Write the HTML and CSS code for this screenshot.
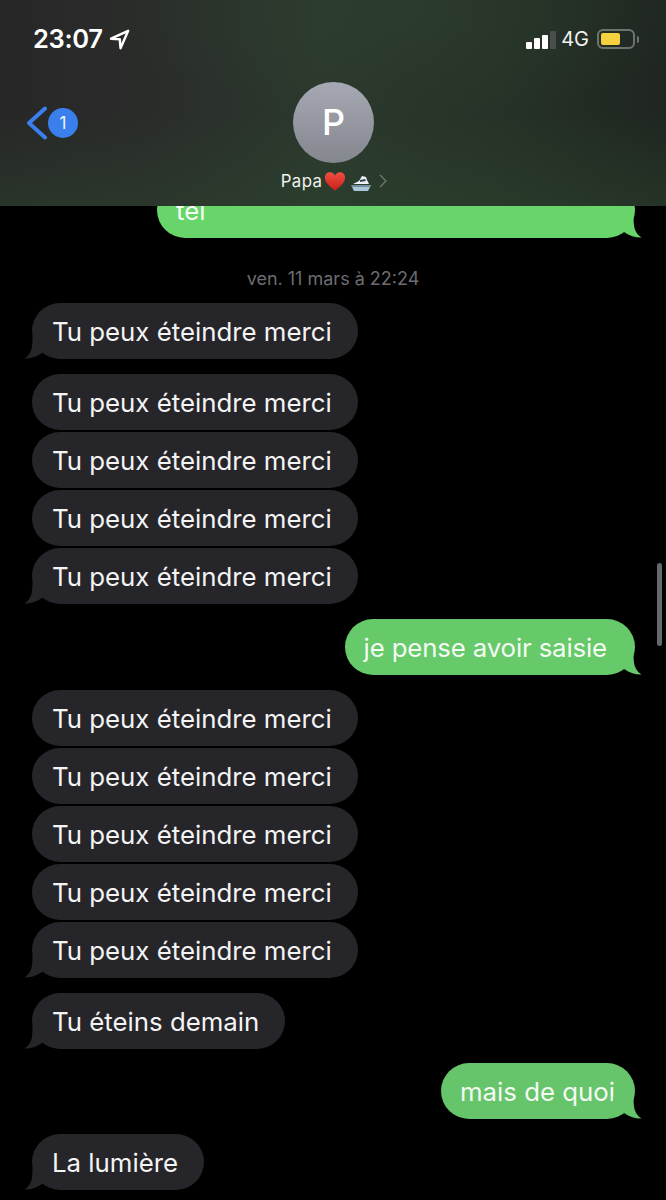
FILE: index.html
```html
<!DOCTYPE html>
<html lang="fr">
<head>
<meta charset="utf-8">
<title>Papa</title>
<link rel="stylesheet" href="styles.css">
</head>
<body>
<div class="phone">
  <header class="header">
    <div class="status">
      <div class="status-left">
        <span class="time">23:07</span>
        <svg class="loc" width="21" height="21" viewBox="0 0 21 21"><path d="M19.200 1.800 2 9.700l8.800.6.700 8.900z" fill="none" stroke="#fff" stroke-width="2.400" stroke-linejoin="round"/></svg>
      </div>
      <div class="status-right">
        <div class="signal"><i class="b1"></i><i class="b2"></i><i class="b3"></i><i class="b4"></i></div>
        <span class="net">4G</span>
        <div class="battery"><div class="level"></div></div>
        <div class="nub"></div>
      </div>
    </div>
    <div class="nav">
      <div class="back">
        <svg width="22" height="34" viewBox="0 0 22 34"><path d="M19 2.500 3 17l16 14.500" fill="none" stroke="#3a7fec" stroke-width="4" stroke-linecap="round" stroke-linejoin="round"/></svg>
        <span class="badge">1</span>
      </div>
      <div class="contact">
        <div class="avatar">P</div>
        <div class="name">
          <span>Papa</span>
          <svg class="heart" width="22" height="21" viewBox="0 0 24 22"><defs><linearGradient id="hg" x1="0" y1="0" x2="0" y2="1"><stop offset="0" stop-color="#f0503f"/><stop offset="1" stop-color="#c81e1a"/></linearGradient></defs><path d="M12 21C6 16 1 12 1 6.800 1 3 3.800 1 6.500 1 9 1 11 2.400 12 4.500 13 2.400 15 1 17.500 1 20.200 1 23 3 23 6.800 23 12 18 16 12 21z" fill="url(#hg)"/></svg>
          <svg class="boat" width="22" height="19" viewBox="0 0 22 19"><path d="M1 12h20l-3 6H4z" fill="#a9c6d6"/><path d="M3 11 9 8l3-5 4 1 1 3 2 4z" fill="#eef2f4"/><path d="M10 7l5-1 1 2-6 1z" fill="#33475a"/><path d="M1 13h19" stroke="#40566a" stroke-width="1"/></svg>
          <svg class="chev" width="8" height="14" viewBox="0 0 8 14"><path d="M1 1l6 6-6 6" fill="none" stroke="#6d7a6e" stroke-width="1.300"/></svg>
        </div>
      </div>
    </div>
  </header>

  <main class="thread">
    <div class="row out">
      <div class="bubble long bright">tel
        <svg class="tail-r" width="30" height="22" viewBox="0 0 30 22"><path d="M20.500 0C20.500 11 21.500 17 28.500 21.500 24 22 17 20 11 16L0 10V0z" fill="#67d56a"/></svg>
      </div>
    </div>

    <div class="stamp">ven. 11 mars à 22:24</div>

    <div class="row in"><div class="bubble">Tu peux éteindre merci
      <svg class="tail-l" width="30" height="22" viewBox="0 0 30 22"><path d="M9.500 0C9.500 11 8.500 17 1.500 21.500 6 22 13 20 19 16L30 10V0z" fill="#26262a"/></svg></div></div>

    <div class="row in sep"><div class="bubble">Tu peux éteindre merci</div></div>
    <div class="row in"><div class="bubble">Tu peux éteindre merci</div></div>
    <div class="row in"><div class="bubble">Tu peux éteindre merci</div></div>
    <div class="row in"><div class="bubble">Tu peux éteindre merci
      <svg class="tail-l" width="30" height="22" viewBox="0 0 30 22"><path d="M9.500 0C9.500 11 8.500 17 1.500 21.500 6 22 13 20 19 16L30 10V0z" fill="#26262a"/></svg></div></div>

    <div class="row out sep"><div class="bubble mid">je pense avoir saisie
      <svg class="tail-r" width="30" height="22" viewBox="0 0 30 22"><path d="M20.500 0C20.500 11 21.500 17 28.500 21.500 24 22 17 20 11 16L0 10V0z" fill="#66c96a"/></svg></div></div>

    <div class="row in sep"><div class="bubble">Tu peux éteindre merci</div></div>
    <div class="row in"><div class="bubble">Tu peux éteindre merci</div></div>
    <div class="row in"><div class="bubble">Tu peux éteindre merci</div></div>
    <div class="row in"><div class="bubble">Tu peux éteindre merci</div></div>
    <div class="row in"><div class="bubble">Tu peux éteindre merci
      <svg class="tail-l" width="30" height="22" viewBox="0 0 30 22"><path d="M9.500 0C9.500 11 8.500 17 1.500 21.500 6 22 13 20 19 16L30 10V0z" fill="#26262a"/></svg></div></div>

    <div class="row in sep"><div class="bubble">Tu éteins demain
      <svg class="tail-l" width="30" height="22" viewBox="0 0 30 22"><path d="M9.500 0C9.500 11 8.500 17 1.500 21.500 6 22 13 20 19 16L30 10V0z" fill="#26262a"/></svg></div></div>

    <div class="row out sep-s"><div class="bubble dim">mais de quoi
      <svg class="tail-r" width="30" height="22" viewBox="0 0 30 22"><path d="M20.500 0C20.500 11 21.500 17 28.500 21.500 24 22 17 20 11 16L0 10V0z" fill="#66c46a"/></svg></div></div>

    <div class="row in sep"><div class="bubble">La lumière
      <svg class="tail-l" width="30" height="22" viewBox="0 0 30 22"><path d="M9.500 0C9.500 11 8.500 17 1.500 21.500 6 22 13 20 19 16L30 10V0z" fill="#26262a"/></svg></div></div>
  </main>
  <div class="scrollbar"></div>
</div>
</body>
</html>
```
FILE: styles.css
```css
* { box-sizing: border-box; }
html, body { margin: 0; padding: 0; background: #000; }
body { font-family: Inter, "Liberation Sans", sans-serif; color: #f4f4f4; }
.phone { position: relative; width: 666px; height: 1200px; overflow: hidden; background: #000; }

.header {
  position: relative;
  z-index: 1;
  height: 206px;
  padding: 26px 27px 0 33px;
  background:
    radial-gradient(ellipse 300px 110px at 400px 10px, rgba(48,70,50,.35), transparent),
    linear-gradient(180deg, transparent 55%, rgba(44,68,46,.45) 100%),
    linear-gradient(90deg, #272727 0%, #2a2c2a 22%, #2b392d 48%, #263227 75%, #1f2620 100%);
}
.status { display: flex; justify-content: space-between; align-items: center; height: 26px; }
.status-left { display: flex; align-items: center; gap: 6px; }
.time { font-size: 25.500px; font-weight: 600; letter-spacing: -.3px; line-height: 26px; color: #fff; }
.status-right { display: flex; align-items: center; }
.signal { display: flex; align-items: flex-end; gap: 2px; height: 19px; margin-right: 5px; }
.signal i { display: block; width: 6px; background: #fff; border-radius: 1px; }
.b1 { height: 7px; } .b2 { height: 11px; } .b3 { height: 14px; }
.signal .b4 { height: 18px; background: #4a4f4b; }
.net { font-size: 20px; font-weight: 400; line-height: 20px; margin-right: 8px; color: #f2f2f2; }
.battery { width: 38px; height: 20px; border: 2px solid #6f736f; border-radius: 6px; padding: 2px; }
.level { width: 19px; height: 100%; background: #f6d13f; border-radius: 2px; }
.nub { width: 2px; height: 7px; margin-left: 2px; background: #6f736f; border-radius: 0 2px 2px 0; }

.nav { position: relative; display: flex; justify-content: center; margin-top: 30px; margin-left: -33px; margin-right: -27px; }
.back { position: absolute; left: 26px; top: 24px; display: flex; align-items: center; }
.badge { width: 30px; height: 30px; border-radius: 50%; background: #3a7fec; font-size: 17px; line-height: 30px; text-align: center; color: #f4f4f4; }
.contact { display: flex; flex-direction: column; align-items: center; }
.avatar { width: 81px; height: 81px; margin-left: 1px; border-radius: 50%; background: linear-gradient(180deg, #a6a8b3, #85878f); color: #fff; font-size: 36px; font-weight: 500; line-height: 81px; text-align: center; }
.name { display: flex; align-items: center; height: 20px; margin-top: 8px; padding-left: 2px; font-size: 16.800px; letter-spacing: .4px; color: #f0f2ee; }
.heart { margin-left: 2px; }
.boat { margin-left: 4px; margin-top: 3px; }
.chev { margin-left: 7px; }

.thread { display: flex; flex-direction: column; margin-top: -24px; }
.row { display: flex; margin-top: 2px; }
.row.sep { margin-top: 15px; }
.row.sep-s { margin-top: 14px; }
.row.in { padding-left: 32px; justify-content: flex-start; }
.row.out { padding-right: 31px; justify-content: flex-end; }
.row:first-child { margin-top: 0; }
.bubble { position: relative; height: 56px; padding: 0 26px 0 20px; border-radius: 28px; background: #26262a; font-size: 25.800px; line-height: 58px; white-space: nowrap; }
.row.out .bubble { padding: 0 28px 0 19px; color: #f4fbf2; }
.bubble.long { width: 478px; background: #67d56a; }
.row.out .bubble.dim { padding-right: 20px; background: #66c46a; }
.bubble.mid { background: #66c96a; letter-spacing: -.15px; }
.tail-l { position: absolute; left: -9px; bottom: 0; }
.tail-r { position: absolute; right: -8px; bottom: 0; }

.stamp { height: 20px; margin: 31px 0 12px; font-size: 18px; line-height: 20px; text-align: center; color: #6c6c71; }

.scrollbar { position: absolute; left: 657px; top: 563px; width: 5px; height: 83px; border-radius: 3px; background: #68686c; }
```
